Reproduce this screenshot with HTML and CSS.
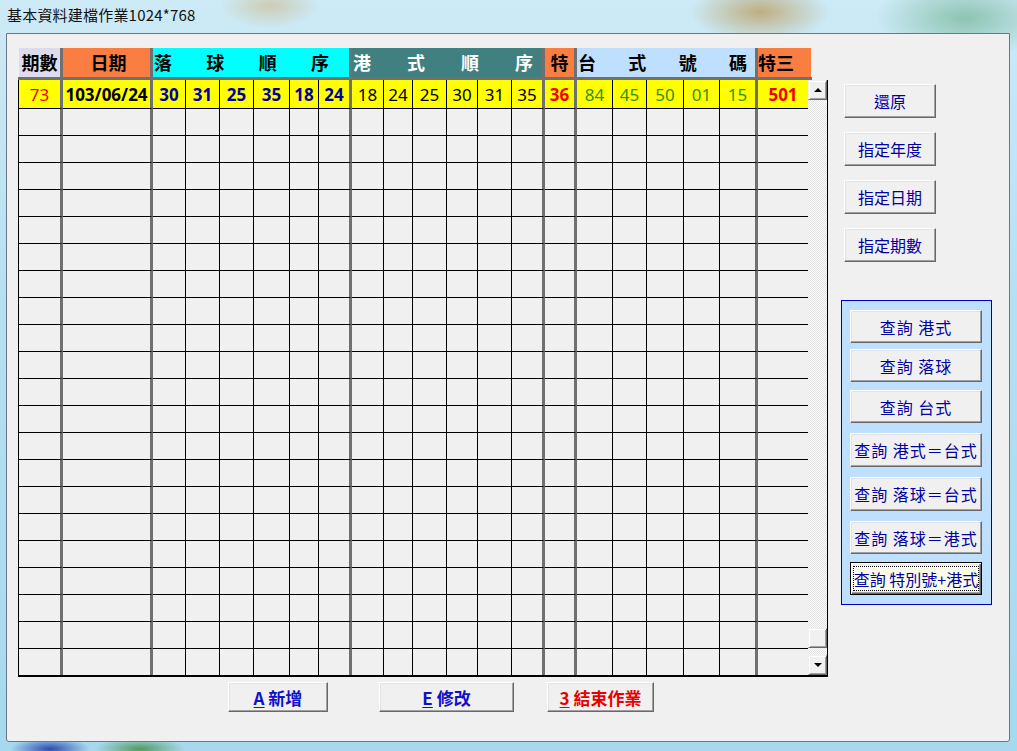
FILE: index.html
```html
<!DOCTYPE html>
<html lang="zh-Hant">
<head>
<meta charset="utf-8">
<title>基本資料建檔作業</title>
<link rel="stylesheet" href="styles.css">
</head>
<body>
<div class="caption">基本資料建檔作業1024*768</div>
<div class="window">
  <div class="main">
    <div class="left">
      <div class="grid">
        <div class="head">
          <div class="h h-no">期數</div>
          <div class="h h-date">日期</div>
          <div class="h h-drop spread"><span>落</span><span>球</span><span>順</span><span>序</span></div>
          <div class="h h-hk spread"><span>港</span><span>式</span><span>順</span><span>序</span></div>
          <div class="h h-sp">特</div>
          <div class="h h-tw spread"><span>台</span><span>式</span><span>號</span><span>碼</span></div>
          <div class="h h-sp3">特三</div>
        </div>
        <div class="body">
          <div class="rows">
            <div class="row first">
              <span class="red">73</span>
              <span class="blk b">103/06/24</span>
              <span class="blue b">30</span><span class="blue b">31</span><span class="blue b">25</span><span class="blue b">35</span><span class="blue b">18</span><span class="blue b">24</span>
              <span class="blk">18</span><span class="blk">24</span><span class="blk">25</span><span class="blk">30</span><span class="blk">31</span><span class="blk">35</span>
              <span class="red b">36</span>
              <span class="grn">84</span><span class="grn">45</span><span class="grn">50</span><span class="grn">01</span><span class="grn">15</span>
              <span class="red b">501</span>
            </div>
            <div class="row"><span></span><span></span><span></span><span></span><span></span><span></span><span></span><span></span><span></span><span></span><span></span><span></span><span></span><span></span><span></span><span></span><span></span><span></span><span></span><span></span><span></span></div>
            <div class="row"><span></span><span></span><span></span><span></span><span></span><span></span><span></span><span></span><span></span><span></span><span></span><span></span><span></span><span></span><span></span><span></span><span></span><span></span><span></span><span></span><span></span></div>
            <div class="row"><span></span><span></span><span></span><span></span><span></span><span></span><span></span><span></span><span></span><span></span><span></span><span></span><span></span><span></span><span></span><span></span><span></span><span></span><span></span><span></span><span></span></div>
            <div class="row"><span></span><span></span><span></span><span></span><span></span><span></span><span></span><span></span><span></span><span></span><span></span><span></span><span></span><span></span><span></span><span></span><span></span><span></span><span></span><span></span><span></span></div>
            <div class="row"><span></span><span></span><span></span><span></span><span></span><span></span><span></span><span></span><span></span><span></span><span></span><span></span><span></span><span></span><span></span><span></span><span></span><span></span><span></span><span></span><span></span></div>
            <div class="row"><span></span><span></span><span></span><span></span><span></span><span></span><span></span><span></span><span></span><span></span><span></span><span></span><span></span><span></span><span></span><span></span><span></span><span></span><span></span><span></span><span></span></div>
            <div class="row"><span></span><span></span><span></span><span></span><span></span><span></span><span></span><span></span><span></span><span></span><span></span><span></span><span></span><span></span><span></span><span></span><span></span><span></span><span></span><span></span><span></span></div>
            <div class="row"><span></span><span></span><span></span><span></span><span></span><span></span><span></span><span></span><span></span><span></span><span></span><span></span><span></span><span></span><span></span><span></span><span></span><span></span><span></span><span></span><span></span></div>
            <div class="row"><span></span><span></span><span></span><span></span><span></span><span></span><span></span><span></span><span></span><span></span><span></span><span></span><span></span><span></span><span></span><span></span><span></span><span></span><span></span><span></span><span></span></div>
            <div class="row"><span></span><span></span><span></span><span></span><span></span><span></span><span></span><span></span><span></span><span></span><span></span><span></span><span></span><span></span><span></span><span></span><span></span><span></span><span></span><span></span><span></span></div>
            <div class="row"><span></span><span></span><span></span><span></span><span></span><span></span><span></span><span></span><span></span><span></span><span></span><span></span><span></span><span></span><span></span><span></span><span></span><span></span><span></span><span></span><span></span></div>
            <div class="row"><span></span><span></span><span></span><span></span><span></span><span></span><span></span><span></span><span></span><span></span><span></span><span></span><span></span><span></span><span></span><span></span><span></span><span></span><span></span><span></span><span></span></div>
            <div class="row"><span></span><span></span><span></span><span></span><span></span><span></span><span></span><span></span><span></span><span></span><span></span><span></span><span></span><span></span><span></span><span></span><span></span><span></span><span></span><span></span><span></span></div>
            <div class="row"><span></span><span></span><span></span><span></span><span></span><span></span><span></span><span></span><span></span><span></span><span></span><span></span><span></span><span></span><span></span><span></span><span></span><span></span><span></span><span></span><span></span></div>
            <div class="row"><span></span><span></span><span></span><span></span><span></span><span></span><span></span><span></span><span></span><span></span><span></span><span></span><span></span><span></span><span></span><span></span><span></span><span></span><span></span><span></span><span></span></div>
            <div class="row"><span></span><span></span><span></span><span></span><span></span><span></span><span></span><span></span><span></span><span></span><span></span><span></span><span></span><span></span><span></span><span></span><span></span><span></span><span></span><span></span><span></span></div>
            <div class="row"><span></span><span></span><span></span><span></span><span></span><span></span><span></span><span></span><span></span><span></span><span></span><span></span><span></span><span></span><span></span><span></span><span></span><span></span><span></span><span></span><span></span></div>
            <div class="row"><span></span><span></span><span></span><span></span><span></span><span></span><span></span><span></span><span></span><span></span><span></span><span></span><span></span><span></span><span></span><span></span><span></span><span></span><span></span><span></span><span></span></div>
            <div class="row"><span></span><span></span><span></span><span></span><span></span><span></span><span></span><span></span><span></span><span></span><span></span><span></span><span></span><span></span><span></span><span></span><span></span><span></span><span></span><span></span><span></span></div>
            <div class="row"><span></span><span></span><span></span><span></span><span></span><span></span><span></span><span></span><span></span><span></span><span></span><span></span><span></span><span></span><span></span><span></span><span></span><span></span><span></span><span></span><span></span></div>
            <div class="row"><span></span><span></span><span></span><span></span><span></span><span></span><span></span><span></span><span></span><span></span><span></span><span></span><span></span><span></span><span></span><span></span><span></span><span></span><span></span><span></span><span></span></div>
          </div>
          <div class="scroll">
            <div class="sb sb-up"></div>
            <div class="track"><div class="sb thumb"></div></div>
            <div class="sb sb-down"></div>
          </div>
        </div>
      </div>
      <div class="actions">
        <button class="btn act act-add"><u>A</u>&nbsp;新增</button>
        <button class="btn act act-edit"><u>E</u>&nbsp;修改</button>
        <button class="btn act act-exit"><u>3</u>&nbsp;結束作業</button>
      </div>
    </div>
    <div class="side">
      <button class="btn tool">還原</button>
      <button class="btn tool">指定年度</button>
      <button class="btn tool">指定日期</button>
      <button class="btn tool">指定期數</button>
      <div class="group">
        <button class="btn q">查詢 港式</button>
        <button class="btn q">查詢 落球</button>
        <button class="btn q">查詢 台式</button>
        <button class="btn q">查詢 港式＝台式</button>
        <button class="btn q">查詢 落球＝台式</button>
        <button class="btn q">查詢 落球＝港式</button>
        <button class="btn q focus"><span class="ring">查詢 特別號+港式</span></button>
      </div>
    </div>
  </div>
</div>
</body>
</html>
```

FILE: styles.css
```css
* { box-sizing: border-box; }
html, body { margin: 0; padding: 0; }

body {
  width: 1017px;
  height: 751px;
  overflow: hidden;
  font-family: "Noto Sans CJK TC", "Noto Sans", sans-serif;
  background:
    radial-gradient(ellipse 70px 30px at 760px 12px, rgba(185,155,90,.75), rgba(185,155,90,0)),
    radial-gradient(ellipse 50px 22px at 270px 6px, rgba(205,185,135,.6), rgba(205,185,135,0)),
    radial-gradient(ellipse 90px 40px at 965px 18px, rgba(90,165,120,.55), rgba(90,165,120,0)),
    radial-gradient(ellipse 40px 12px at 50px 749px, rgba(30,60,170,.9), rgba(30,60,170,0)),
    radial-gradient(ellipse 45px 12px at 140px 749px, rgba(60,140,60,.8), rgba(60,140,60,0)),
    linear-gradient(180deg, #cdeaf6 0, #b5e0f2 40%, #a6d9ee 100%);
}

.caption {
  height: 33px;
  padding: 6px 0 0 7px;
  font-size: 15px;
  line-height: 18px;
  color: #111;
  letter-spacing: 0.2px;
}

.window {
  margin-left: 6px;
  width: 1004px;
  height: 709px;
  border: 1px solid #6b7785;
  border-radius: 0 0 3px 3px;
  background: #f0f0f0;
  padding: 14px 0 0 11px;
}

.main { display: flex; align-items: flex-start; }
.left { width: 810px; }

/* ---------- header ---------- */
.head {
  display: flex;
  width: 794px;
  height: 32px;
  padding-left: 1px;
  border-bottom: 3px solid #707070;
}
.h {
  height: 29px;
  line-height: 29px;
  font-size: 18px;
  font-weight: 700;
  color: #000;
  border-right: 3px solid #707070;
  white-space: nowrap;
}
.spread { display: flex; justify-content: space-between; }
.h-no   { width: 44px;  background: #dcdcec; text-align: center; }
.h-date { width: 90px;  background: #fa7d41; text-align: center; padding-left: 4px; }
.h-drop { width: 199px; background: #00ffff; padding: 0 20px 0 1px; }
.h-hk   { width: 193px; background: #408080; color: #fff; padding: 0 9px 0 1px; }
.h-sp   { width: 32px;  background: #fa7d41; text-align: center; }
.h-tw   { width: 181px; background: #bfdfff; padding: 0 8px 0 1px; }
.h-sp3  { width: 53px;  background: #fa7d41; border-right: 0; }

/* ---------- body ---------- */
.body {
  display: flex;
  height: 597px;
  border-left: 1px solid #000;
  border-right: 1px solid #000;
  border-bottom: 2px solid #000;
}
.rows { width: 789px; }
.row {
  display: grid;
  grid-template-columns: 44px 90px 33px 34px 34px 36px 29px 33px 32px 29px 34px 31px 34px 33px 32px 36px 34px 37px 36px 38px 50px;
  height: 27px;
}
.row.first { height: 29px; }
.row:last-child { height: 26px; }
.row > span {
  border-right: 1px solid #000;
  border-bottom: 1px solid #000;
}
.row:last-child > span { border-bottom: 0; }
.row > span:nth-child(1),
.row > span:nth-child(2),
.row > span:nth-child(8),
.row > span:nth-child(14),
.row > span:nth-child(15),
.row > span:nth-child(20) { border-right: 3px solid #707070; }
.row > span:nth-child(21) { border-right: 0; }

.row.first > span {
  background: #ffff00;
  text-align: center;
  font-family: "Noto Sans", "Noto Sans CJK TC", sans-serif;
  font-size: 17px;
  line-height: 25px;
  padding-top: 2px;
  white-space: nowrap;
}
.b    { font-weight: 700; }
.red  { color: #f00000; }
.blk  { color: #000; }
.blue { color: #0000a0; }
.grn  { color: #339000; }

/* ---------- scrollbar ---------- */
.scroll {
  width: 19px;
  display: flex;
  flex-direction: column;
  background: repeating-conic-gradient(#fcfcfc 0 25%, #e4e4e4 0 50%) 0 0 / 2px 2px;
}
.sb {
  height: 20px;
  background: #f0f0f0;
  border: 1px solid;
  border-color: #f0f0f0 #696969 #696969 #f0f0f0;
  box-shadow: inset 1px 1px 0 #fff, inset -1px -1px 0 #a0a0a0;
  display: flex;
  align-items: center;
  justify-content: center;
}
.sb-up::before {
  content: "";
  border-left: 4px solid transparent;
  border-right: 4px solid transparent;
  border-bottom: 4px solid #000;
}
.sb-down::before {
  content: "";
  border-left: 4px solid transparent;
  border-right: 4px solid transparent;
  border-top: 4px solid #000;
}
.track {
  flex: 1;
  display: flex;
  flex-direction: column;
  justify-content: flex-end;
  padding-bottom: 7px;
}

/* ---------- buttons ---------- */
.btn {
  font-family: "Noto Sans CJK TC", "Noto Sans", sans-serif;
  margin: 0;
  padding: 0;
  background: #f0f0f0;
  border: 1px solid;
  border-color: #fff #696969 #696969 #fff;
  box-shadow: inset -1px -1px 0 #a0a0a0, inset 1px 1px 0 #e3e3e3;
  display: flex;
  align-items: center;
  justify-content: center;
  white-space: nowrap;
  cursor: default;
}

.actions {
  display: flex;
  margin-top: 5px;
  padding-left: 210px;
}
.act { height: 30px; font-size: 17px; font-weight: 700; }
.act u { text-underline-offset: 2px; }
.act-add  { width: 100px; color: #1010c8; }
.act-edit { width: 135px; margin-left: 51px; color: #1010c8; }
.act-exit { width: 107px; margin-left: 33px; color: #e80000; }

.side {
  display: flex;
  flex-direction: column;
  padding-left: 16px;
}
.tool {
  width: 92px;
  height: 34px;
  margin-top: 14px;
  font-size: 16px;
  color: #0000a0;
}
.tool:first-child { margin-top: 36px; }

.group {
  margin-top: 38px;
  margin-left: -3px;
  width: 151px;
  height: 305px;
  border: 1px solid #0000c0;
  background: #bfdfff;
  padding: 9px 0 0 8px;
  display: flex;
  flex-direction: column;
}
.q {
  width: 132px;
  height: 33px;
  font-size: 16px;
  color: #0000a0;
  letter-spacing: 1px;
}
.q:nth-child(2) { margin-top: 6px; }
.q:nth-child(3) { margin-top: 8px; }
.q:nth-child(4) { margin-top: 10px; height: 34px; }
.q:nth-child(5) { margin-top: 10px; height: 34px; }
.q:nth-child(6) { margin-top: 10px; }
.q:nth-child(7) { margin-top: 8px; letter-spacing: 0; }
.q.focus {
  border-color: #000;
  box-shadow: inset 1px 1px 0 #fff, inset -1px -1px 0 #696969, inset -2px -2px 0 #a0a0a0;
}
.ring {
  display: flex;
  align-items: center;
  justify-content: center;
  width: 126px;
  height: 25px;
  border: 1px dotted #000;
  background: #fafae8;
}
```
